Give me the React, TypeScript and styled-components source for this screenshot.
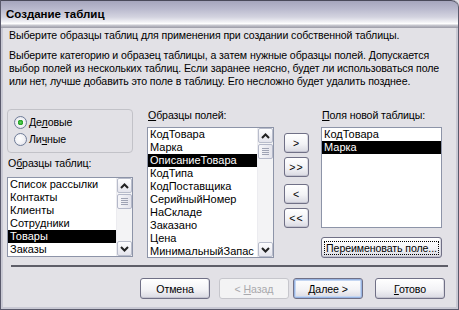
import styled, { createGlobalStyle } from "styled-components";

const GlobalStyle = createGlobalStyle`
  html, body {
    margin: 0;
    padding: 0;
    background: #e2e1e6;
  }
  body {
    font-family: "Liberation Sans", Arial, sans-serif;
    font-size: 10.6px;
    letter-spacing: -0.1px;
    color: #000;
  }
`;

const tableSamples = ["Список рассылки", "Контакты", "Клиенты", "Сотрудники", "Товары", "Заказы"];
const fieldSamples = [
  "КодТовара",
  "Марка",
  "ОписаниеТовара",
  "КодТипа",
  "КодПоставщика",
  "СерийныйНомер",
  "НаСкладе",
  "Заказано",
  "Цена",
  "МинимальныйЗапас",
];
const newFields = ["КодТовара", "Марка"];

function Chevron({ down }: { down?: boolean }) {
  return (
    <svg width="9" height="6" viewBox="0 0 9 6">
      <polyline
        points={down ? "1,1 4.5,4.5 8,1" : "1,5 4.5,1.5 8,5"}
        fill="none"
        stroke="#222"
        strokeWidth="2"
      />
    </svg>
  );
}

function ScrollBar() {
  return (
    <Scroll>
      <ScrollBtn>
        <Chevron />
      </ScrollBtn>
      <Track>
        <Thumb>
          <Grip />
          <Grip />
          <Grip />
          <Grip />
        </Thumb>
      </Track>
      <ScrollBtn>
        <Chevron down />
      </ScrollBtn>
    </Scroll>
  );
}

function ListBox({
  items,
  selected,
  height,
  scroll,
}: {
  items: string[];
  selected: number;
  height: number;
  scroll?: boolean;
}) {
  return (
    <List $h={height}>
      <Items>
        {items.map((it, i) => (
          <Item key={it} $sel={i === selected}>
            {it}
          </Item>
        ))}
      </Items>
      {scroll && <ScrollBar />}
    </List>
  );
}

export default function App() {
  return (
    <>
      <GlobalStyle />
      <Window>
        <TitleBar>Создание таблиц</TitleBar>
        <Body>
          <Intro>Выберите образцы таблиц для применения при создании собственной таблицы.</Intro>
          <Para>
            Выберите категорию и образец таблицы, а затем нужные образцы полей. Допускается
            <br />
            выбор полей из нескольких таблиц. Если заранее неясно, будет ли использоваться поле
            <br />
            или нет, лучше добавить это поле в таблицу. Его несложно будет удалить позднее.
          </Para>
          <Main>
            <Column $w={126}>
              <GroupBox>
                <RadioRow>
                  <Radio $on />
                  <span>
                    Де<Key>л</Key>овые
                  </span>
                </RadioRow>
                <RadioRow>
                  <Radio />
                  <span>
                    Ли<Key>ч</Key>ные
                  </span>
                </RadioRow>
              </GroupBox>
              <Label $mt={4}>
                О<Key>б</Key>разцы таблиц:
              </Label>
              <ListSpacer $mt={7}>
                <ListBox items={tableSamples} selected={4} height={80} scroll />
              </ListSpacer>
            </Column>
            <Column $w={127} $ml={14}>
              <Label>
                <Key>О</Key>бразцы полей:
              </Label>
              <ListSpacer $mt={5}>
                <ListBox items={fieldSamples} selected={2} height={131} scroll />
              </ListSpacer>
            </Column>
            <ArrowCol>
              <SmallBtn>&gt;</SmallBtn>
              <SmallBtn $mt={4}>&gt;&gt;</SmallBtn>
              <SmallBtn $mt={7}>&lt;</SmallBtn>
              <SmallBtn $mt={4}>&lt;&lt;</SmallBtn>
            </ArrowCol>
            <Column $w={121} $ml={12}>
              <Label>
                <Key>П</Key>оля новой таблицы:
              </Label>
              <ListSpacer $mt={5}>
                <ListBox items={newFields} selected={1} height={101} />
              </ListSpacer>
              <Button $mt={9} $w={121}>
                <Focus>Переименовать поле...</Focus>
              </Button>
            </Column>
          </Main>
          <Separator />
          <Footer>
            <Button $w={70}>Отмена</Button>
            <Button $w={70} $ml={9} disabled>
              &lt; <Key>Н</Key>азад
            </Button>
            <Button $w={70} $ml={4} $default>
              <Key>Д</Key>алее &gt;
            </Button>
            <Button $w={70} $ml={12}>
              <Key>Г</Key>отово
            </Button>
          </Footer>
        </Body>
      </Window>
    </>
  );
}

const Window = styled.div`
  width: 459px;
  height: 310px;
  box-sizing: border-box;
  display: flex;
  flex-direction: column;
  background: #e2e1e6;
  border: 1px solid #5a5a6c;
  border-top: none;
  border-radius: 0 7px 0 0;
  box-shadow: inset 2px 0 0 #c9c9d4, inset -2px 0 0 #c9c9d4, inset 0 -2px 0 #c9c9d4;
  overflow: hidden;
`;

const TitleBar = styled.div`
  height: 28px;
  box-sizing: border-box;
  border-top: 1px solid #4a4a5a;
  border-radius: 0 7px 0 0;
  display: flex;
  align-items: center;
  padding: 0 0 2px 5px;
  font-size: 11.5px;
  letter-spacing: 0;
  font-weight: bold;
  color: #000;
  background: linear-gradient(
    #a6a6bd 0%,
    #babace 30%,
    #d4d4e0 60%,
    #f2f2f6 78%,
    #ffffff 84%,
    #c6c6ce 90%,
    #9a9aa6 100%
  );
`;

const Body = styled.div`
  display: flex;
  flex-direction: column;
  padding: 1px 11px 0 6px;
  line-height: 13px;
`;

const Intro = styled.div`
  padding-left: 2px;
  white-space: nowrap;
`;

const Para = styled.div`
  margin-top: 7px;
  padding-left: 2px;
  white-space: nowrap;
`;

const Main = styled.div`
  display: flex;
  margin-top: 21px;
  height: 149px;
`;

const Column = styled.div<{ $w: number; $ml?: number }>`
  display: flex;
  flex-direction: column;
  width: ${(p) => p.$w}px;
  margin-left: ${(p) => p.$ml ?? 0}px;
`;

const GroupBox = styled.div`
  height: 44px;
  box-sizing: border-box;
  border: 1px solid #c2c2c8;
  border-radius: 4px;
  padding: 6px 0 0 6px;
  display: flex;
  flex-direction: column;
  gap: 4px;
`;

const RadioRow = styled.div`
  display: flex;
  align-items: center;
  height: 13px;
`;

const Radio = styled.span<{ $on?: boolean }>`
  width: 13px;
  height: 13px;
  box-sizing: border-box;
  border-radius: 50%;
  border: 1px solid #6f7c98;
  margin-right: 2px;
  background: ${(p) =>
    p.$on
      ? "radial-gradient(circle, #5fd35f 0, #22a022 2.5px, #f6f6f8 3px, #dcdce6 100%)"
      : "radial-gradient(circle at 40% 40%, #ffffff 0, #f2f2f6 50%, #d8d8e2 100%)"};
`;

const Key = styled.span`
  text-decoration: underline;
`;

const Label = styled.div<{ $mt?: number }>`
  margin-top: ${(p) => p.$mt ?? 0}px;
  padding-left: 1px;
  height: 13px;
  white-space: nowrap;
`;

const ListSpacer = styled.div<{ $mt: number }>`
  margin-top: ${(p) => p.$mt}px;
`;

const List = styled.div<{ $h: number }>`
  height: ${(p) => p.$h}px;
  box-sizing: border-box;
  border: 1px solid #8d94a8;
  background: #fff;
  display: flex;
  overflow: hidden;
`;

const Items = styled.div`
  flex: 1;
  min-width: 0;
  overflow: hidden;
`;

const Item = styled.div<{ $sel?: boolean }>`
  height: 13px;
  line-height: 13px;
  padding-left: 2px;
  font-size: 11px;
  letter-spacing: 0;
  white-space: nowrap;
  background: ${(p) => (p.$sel ? "#000" : "transparent")};
  color: ${(p) => (p.$sel ? "#fff" : "#000")};
`;

const Scroll = styled.div`
  width: 15px;
  display: flex;
  flex-direction: column;
  background: #f3f3f5;
  border-left: 1px solid #ececf0;
`;

const ScrollBtn = styled.div`
  height: 15px;
  box-sizing: border-box;
  border: 1px solid #b8bccb;
  border-radius: 2px;
  background: linear-gradient(#fdfdfe, #e4e4ec);
  display: flex;
  align-items: center;
  justify-content: center;
`;

const Track = styled.div`
  flex: 1;
  padding-top: 1px;
`;

const Thumb = styled.div`
  height: 15px;
  box-sizing: border-box;
  border: 1px solid #b4b8c9;
  border-radius: 2px;
  background: linear-gradient(90deg, #f6f6f9, #e4e4ec);
  display: flex;
  flex-direction: column;
  align-items: center;
  justify-content: center;
  gap: 1px;
`;

const Grip = styled.span`
  width: 7px;
  height: 1px;
  background: #9fa3b4;
`;

const ArrowCol = styled.div`
  display: flex;
  flex-direction: column;
  width: 25px;
  margin-left: 10px;
  padding-top: 24px;
`;

const buttonBase = `
  box-sizing: border-box;
  font-family: "Liberation Sans", Arial, sans-serif;
  font-size: 10.6px;
  letter-spacing: -0.1px;
  white-space: nowrap;
  color: #000;
  border: 1px solid #707086;
  border-radius: 3px;
  padding: 0;
  background: linear-gradient(#ffffff 0%, #f3f3f6 55%, #d9d9e2 100%);
  box-shadow: inset 0 -1px 0 #c4c4d0, inset -1px 0 0 #dadae2;
`;

const SmallBtn = styled.button<{ $mt?: number }>`
  ${buttonBase}
  width: 25px;
  height: 20px;
  margin-top: ${(p) => p.$mt ?? 0}px;
  letter-spacing: 1px;
`;

const Button = styled.button<{ $w: number; $ml?: number; $mt?: number; $default?: boolean }>`
  ${buttonBase}
  width: ${(p) => p.$w}px;
  height: 21px;
  margin-left: ${(p) => p.$ml ?? 0}px;
  margin-top: ${(p) => p.$mt ?? 0}px;
  ${(p) =>
    p.$default &&
    `box-shadow: inset 0 0 0 1px #98b4e2, inset 0 0 0 2px #c4d6f2;`}

  &:disabled {
    color: #a9a9ad;
    border-color: #c6c6cc;
    background: #f3f3f4;
    box-shadow: none;
  }
`;

const Focus = styled.span`
  outline: 1px dotted #000;
  padding: 0 1px;
`;

const Separator = styled.div`
  margin: 7px 0 0 4px;
  width: 437px;
  height: 2px;
  background: #5e5e68;
`;

const Footer = styled.div`
  display: flex;
  justify-content: flex-end;
  margin-top: 11px;
  padding-right: 2px;
`;
